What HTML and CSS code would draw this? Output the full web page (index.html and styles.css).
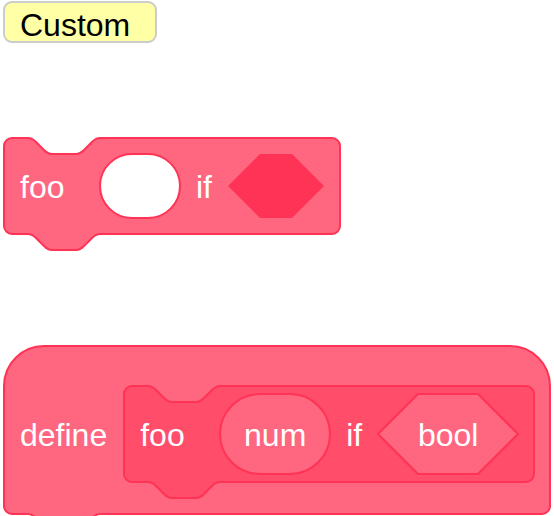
FILE: index.html
```html
<!DOCTYPE html>
<html lang="en">
<head>
<meta charset="utf-8">
<title>Custom blocks</title>
<link rel="stylesheet" href="styles.css">
</head>
<body>
<svg class="defs" aria-hidden="true">
  <symbol id="notch" viewBox="0 -1 72 18">
    <path class="notch-fill" d="M0,0 c4,0 6,2 8,4 l8,8 c2,2 4,4 8,4 h24 c4,0 6,-2 8,-4 l8,-8 c2,-2 4,-4 8,-4 v-1 h-72 z"/>
    <path class="notch-line" d="M0,0 c4,0 6,2 8,4 l8,8 c2,2 4,4 8,4 h24 c4,0 6,-2 8,-4 l8,-8 c2,-2 4,-4 8,-4"/>
  </symbol>
</svg>
<main class="workspace">
  <button class="custom-button" type="button">Custom</button>

  <div class="block call">
    <svg class="notch notch-top" aria-hidden="true"><use href="#notch"/></svg>
    <span class="label name">foo</span>
    <input class="number-input" type="text" aria-label="Number">
    <span class="label">if</span>
    <svg class="empty-bool" viewBox="-1 -1 98 66" aria-hidden="true"><polygon points="32,0 64,0 96,32 64,64 32,64 0,32"/></svg>
    <svg class="notch notch-bottom" aria-hidden="true"><use href="#notch"/></svg>
  </div>

  <div class="block hat">
    <span class="label">define</span>
    <div class="block prototype">
      <svg class="notch notch-top" aria-hidden="true"><use href="#notch"/></svg>
      <span class="label name">foo</span>
      <span class="argument round"><span class="label">num</span></span>
      <span class="label">if</span>
      <span class="argument bool">
        <svg class="bool-shape" viewBox="-1 -1 142 82" aria-hidden="true"><polygon points="40,0 100,0 140,40 100,80 40,80 0,40"/></svg>
        <span class="label">bool</span>
      </span>
      <svg class="notch notch-bottom" aria-hidden="true"><use href="#notch"/></svg>
    </div>
    <svg class="notch notch-bottom" aria-hidden="true"><use href="#notch"/></svg>
  </div>
</main>
</body>
</html>
```
FILE: styles.css
```css
:root {
  --primary: #ff6680;
  --secondary: #ff4d6a;
  --tertiary: #ff3355;
}

* {
  box-sizing: border-box;
}

body {
  margin: 0;
  background: #fff;
  color: #fff;
  font: 32px "Liberation Sans", Arial, sans-serif;
  overflow: hidden;
}

.defs {
  position: absolute;
  width: 0;
  height: 0;
}

.workspace {
  display: flex;
  flex-direction: column;
  align-items: flex-start;
  padding: 1px 3px;
}

.custom-button {
  height: 42px;
  margin: 0 0 94px;
  padding: 6px 25px 0 15px;
  border: 2px solid #cccccc;
  border-radius: 9px;
  background: #ffffa5;
  color: #000;
  font: inherit;
  line-height: 32px;
}

.block {
  --fill: var(--primary);
  --backdrop: #fff;
  position: relative;
  display: flex;
  align-items: center;
  gap: 15px;
  flex: none;
  min-height: 98px;
  padding: 0 14px 0 15px;
  border: 2px solid var(--tertiary);
  border-radius: 9px;
  background: var(--fill);
}

.call {
  margin-bottom: 110px;
}

.hat {
  gap: 16px;
  padding-top: 38px;
  padding-bottom: 30px;
  border-radius: 41px 41px 9px 9px;
}

.prototype {
  --fill: var(--secondary);
  --backdrop: var(--primary);
}

.label {
  padding-top: 2px;
  line-height: 36px;
  white-space: nowrap;
}

.name {
  min-width: 64px;
}

.notch {
  position: absolute;
  left: 23px;
  width: 72px;
  height: 18px;
}

.notch-top {
  --notch: var(--backdrop);
  top: -2px;
}

.notch-bottom {
  --notch: var(--fill);
  top: 100%;
}

.notch-fill {
  fill: var(--notch);
}

.notch-line {
  fill: none;
  stroke: var(--tertiary);
  stroke-width: 2;
}

.number-input {
  width: 82px;
  height: 66px;
  margin: 0;
  padding: 0 16px;
  border: 2px solid var(--tertiary);
  border-radius: 33px;
  background: #fff;
  color: #575e75;
  font: inherit;
  outline: none;
}

.empty-bool {
  width: 98px;
  height: 66px;
  fill: var(--tertiary);
}

.argument {
  position: relative;
  display: flex;
  align-items: center;
  justify-content: center;
  height: 82px;
}

.round {
  width: 112px;
  border: 2px solid var(--tertiary);
  border-radius: 41px;
  background: var(--primary);
}

.bool {
  width: 142px;
}

.bool-shape {
  position: absolute;
  inset: 0;
  width: 142px;
  height: 82px;
  fill: var(--primary);
  stroke: var(--tertiary);
  stroke-width: 2;
}

.bool .label {
  position: relative;
}
```
